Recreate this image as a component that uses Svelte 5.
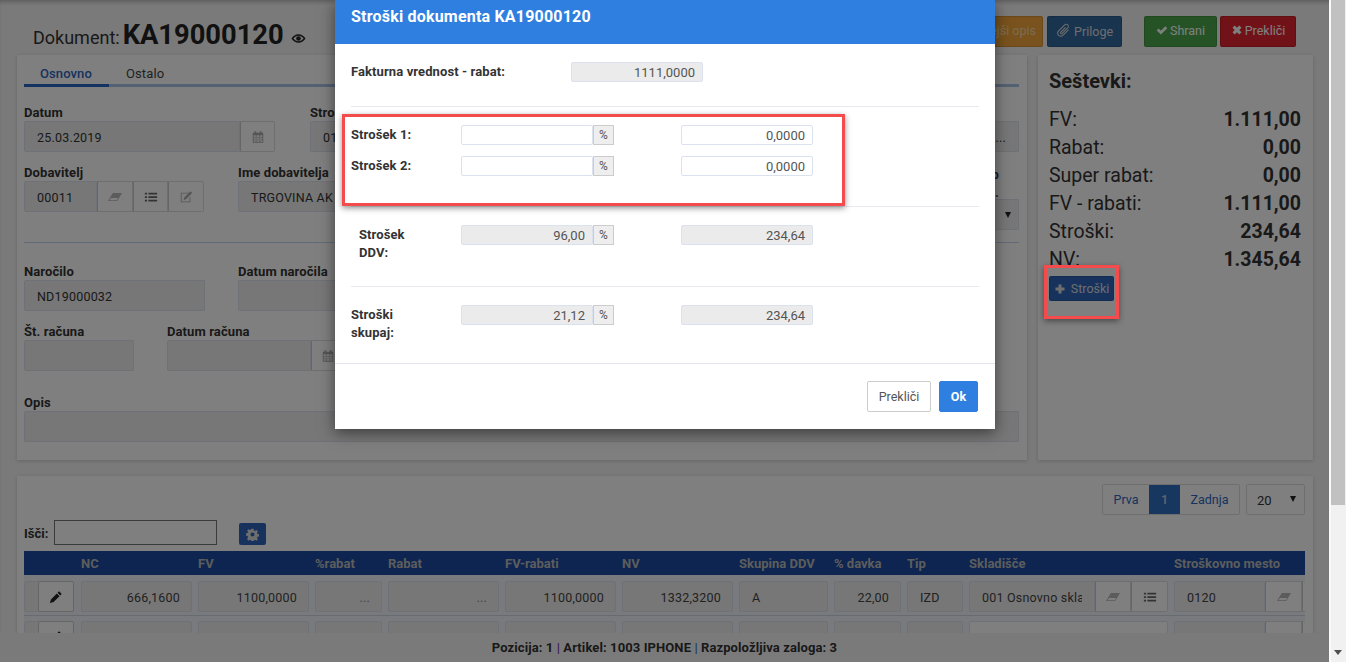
<script>
  const I = {
    eye: "M8 3.500c3.200 0 5.800 2 7.500 4.500-1.700 2.500-4.300 4.500-7.500 4.500S2.200 10.500.5 8C2.200 5.500 4.800 3.500 8 3.500zM8 5C5.800 5 3.900 6.300 2.500 8 3.900 9.700 5.800 11 8 11s4.100-1.300 5.500-3C12.100 6.300 10.200 5 8 5zM8 5.500a2.500 2.500 0 1 1 0 5 2.500 2.500 0 0 1 0-5z",
    cal: "M2 3h2V1.500h2V3h4V1.500h2V3h2v11.500H2zM3 6v7.500h10V6zM5.400 6h1v7.500h-1zM9.600 6h1v7.500h-1zM3 8.200h10v1H3zM3 10.800h10v1H3z",
    eraser: "M5.500 3.500H16L10.500 12.500H0zM3.400 9 1.700 11.700h8.300L11.600 9z",
    list: "M1 3h2.500v2.200H1zM5 3h10v2.200H5zM1 7h2.500v2.200H1zM5 7h10v2.200H5zM1 11h2.500v2.200H1zM5 11h10v2.200H5z",
    edit: "M2 3h9l-1 1H3v9h9V8.500l1-1V14H2zM13 1.500l2 2-7 7-2.800.8.800-2.800z",
    clip: "M13.800 7.500 8 13.300c-2 2-4.800 1.600-6-.2-1.200-1.600-1-3.600.4-5L8.800 1.700c1.200-1.200 3-1.200 4.100-.1s1.100 2.800-.1 4L7 11.400c-.7.700-1.700.7-2.300.1-.6-.6-.6-1.600.1-2.300l5-5 .8.800-5 5c-.2.200-.2.500 0 .7s.5.200.7 0l5.800-5.800c.8-.8.800-1.800.1-2.500s-1.800-.7-2.600.1L3.200 8.900c-1 1-1.100 2.500-.3 3.500.9 1.200 2.900 1.500 4.300.1l5.800-5.800z",
    ok: "M1 8.500 3.500 6l3 3L12.500 3 15 5.500 6.500 14z",
    x: "M2 5l3-3 3 3 3-3 3 3-3 3 3 3-3 3-3-3-3 3-3-3 3-3z",
    plus: "M6 2h4v4h4v4h-4v4H6v-4H2V6h4z",
    cog: "M6.700 1h2.600l.4 2 1.300.6 1.800-1.100 1.800 1.800-1.100 1.800.6 1.300 2 .4v2.600l-2 .4-.6 1.300 1.100 1.800-1.800 1.800-1.800-1.100-1.300.6-.4 2H6.700l-.4-2-1.300-.6-1.800 1.100-1.800-1.800L2.500 11l-.6-1.300-2-.4V6.700l2-.4.6-1.300-1.100-1.800 1.800-1.800L5 2.500l1.300-.6zM8 5.500a2.500 2.500 0 1 0 0 5 2.500 2.500 0 0 0 0-5z",
    pen: "M11.500 1.500l3 3-1.700 1.700-3-3zM9 4l3 3-6.800 6.800-3 .7-1.200.5.500-1.500.7-2.700z"
  };
  const summary = [["FV:","1.111,00"],["Rabat:","0,00"],["Super rabat:","0,00"],["FV - rabati:","1.111,00"],["Stroški:","234,64"],["NV:","1.345,64"]];
  const heads = ["","","NC","FV","%rabat","Rabat","FV-rabati","NV","Skupina DDV","% davka","Tip","Skladišče","Stroškovno mesto"];
</script>

{#snippet ic(n, c = "")}
  <svg class="ic {c}" viewBox="0 0 16 16" aria-hidden="true"><path fill-rule="evenodd" d={I[n]} /></svg>
{/snippet}

<div class="root">
  <div class="main">
    <div class="page">
      <header class="top">
        <div class="title">
          <span class="dok">Dokument:</span>
          <b class="num">KA19000120</b>
          {@render ic("eye", "eye")}
        </div>
        <div class="acts">
          <button class="btn orange">Podrobnejši opis</button>
          <button class="btn navy">{@render ic("clip", "clip")} Priloge</button>
          <button class="btn green">{@render ic("ok")}Shrani</button>
          <button class="btn red">{@render ic("x")}Prekliči</button>
        </div>
      </header>

      <div class="cols">
        <section class="panel form">
          <nav class="tabs">
            <span class="tab on">Osnovno</span>
            <span class="tab">Ostalo</span>
          </nav>

          <div class="row r1">
            <div class="f w251"><label>Datum</label><div class="grp"><div class="inp grow">25.03.2019</div><span class="add w35">{@render ic("cal")}</span></div></div>
            <div class="f g35"><label>Stro</label><div class="inp">01</div></div>
            <div class="f end"><label>&nbsp;</label><div class="inp dots">...</div></div>
          </div>

          <div class="row r2">
            <div class="f w180"><label>Dobavitelj</label><div class="grp"><div class="inp grow">00011</div><span class="add w36 pale">{@render ic("eraser")}</span><span class="add w35 dark">{@render ic("list")}</span><span class="add w36">{@render ic("edit")}</span></div></div>
            <div class="f g34 w400"><label>Ime dobavitelja</label><div class="inp">TRGOVINA AK</div></div>
            <div class="f end lower"><label class="two">p<br />. .</label><div class="inp sel"><i class="car"></i></div></div>
          </div>

          <hr class="sep" />

          <div class="row r3">
            <div class="f w181"><label>Naročilo</label><div class="inp">ND19000032</div></div>
            <div class="f g33 w400"><label>Datum naročila</label><div class="inp"></div></div>
          </div>

          <div class="row r4">
            <div class="f w110"><label>Št. računa</label><div class="inp"></div></div>
            <div class="f g33 w178"><label>Datum računa</label><div class="grp"><div class="inp grow"></div><span class="add w34">{@render ic("cal")}</span></div></div>
          </div>

          <div class="row r5">
            <div class="f full"><label>Opis</label><div class="inp"></div></div>
          </div>
        </section>

        <aside class="panel sum">
          <h3>Seštevki:</h3>
          <div class="list">
            {#each summary as s}
              <div class="li"><span>{s[0]}</span><b>{s[1]}</b></div>
            {/each}
          </div>
          <button class="btn blue small">{@render ic("plus", "plus")} Stroški</button>
        </aside>
      </div>

      <section class="panel tablep">
        <div class="pager">
          <div class="pages"><span>Prva</span><span class="cur">1</span><span>Zadnja</span></div>
          <div class="size">20<i class="car"></i></div>
        </div>
        <div class="search">
          <label>Išči:</label><span class="sinput"></span>
          <button class="gear">{@render ic("cog")}</button>
        </div>
        <div class="tbl">
          <div class="tr th">
            {#each heads as h}<div class="c">{h}</div>{/each}
          </div>
          <div class="tr body">
            <div class="c"><div class="inp"></div></div>
            <div class="c"><span class="editb">{@render ic("pen")}</span></div>
            <div class="c"><div class="inp r">666,1600</div></div>
            <div class="c"><div class="inp r">1100,0000</div></div>
            <div class="c"><div class="inp r dots">...</div></div>
            <div class="c"><div class="inp r dots">...</div></div>
            <div class="c"><div class="inp r">1100,0000</div></div>
            <div class="c"><div class="inp r">1332,3200</div></div>
            <div class="c"><div class="inp">A</div></div>
            <div class="c"><div class="inp r">22,00</div></div>
            <div class="c"><div class="inp">IZD</div></div>
            <div class="c"><div class="grp"><div class="inp grow"><span class="clipt">001 Osnovno skladišče</span></div><span class="add w36 pale">{@render ic("eraser")}</span><span class="add w37 dark">{@render ic("list")}</span></div></div>
            <div class="c last"><div class="grp"><div class="inp grow">0120</div><span class="add w37 pale">{@render ic("eraser")}</span><span class="add w10"></span></div></div>
          </div>
          <div class="tr body second">
            <div class="c"><div class="inp"></div></div>
            <div class="c"><span class="editb">{@render ic("pen")}</span></div>
            <div class="c"><div class="inp"></div></div>
            <div class="c"><div class="inp"></div></div>
            <div class="c"><div class="inp"></div></div>
            <div class="c"><div class="inp"></div></div>
            <div class="c"><div class="inp"></div></div>
            <div class="c"><div class="inp"></div></div>
            <div class="c"><div class="inp"></div></div>
            <div class="c"><div class="inp"></div></div>
            <div class="c"><div class="inp"></div></div>
            <div class="c"><div class="inp plain"></div></div>
            <div class="c last"><div class="grp"><div class="inp grow"></div><span class="add w37"></span><span class="add w10"></span></div></div>
          </div>
        </div>
      </section>
    </div>

    <footer class="foot"><b>Pozicija: 1 <em class="pur">|</em> Artikel: 1003 IPHONE <em class="blu">|</em> Razpoložljiva zaloga: 3</b></footer>

    <div class="overlay"></div>
  </div>

  <div class="modal">
    <div class="mhead">Stroški dokumenta KA19000120</div>
    <div class="msec">
      <div class="mrow first"><label>Fakturna vrednost - rabat:</label><div class="mi dis">1111,0000</div></div>
    </div>
    <div class="msec s2">
      <div class="mrow"><label>Strošek 1:</label><div class="mi pct"></div><span class="pc">%</span><div class="mi val">0,0000</div></div>
      <div class="mrow gap"><label>Strošek 2:</label><div class="mi pct"></div><span class="pc">%</span><div class="mi val">0,0000</div></div>
    </div>
    <div class="msec s3">
      <div class="mrow"><label class="ind">Strošek<br />DDV:</label><div class="mi pct dis">96,00</div><span class="pc">%</span><div class="mi val dis">234,64</div></div>
    </div>
    <div class="msec s4">
      <div class="mrow"><label>Stroški<br />skupaj:</label><div class="mi pct dis">21,12</div><span class="pc">%</span><div class="mi val dis">234,64</div></div>
    </div>
    <div class="mfoot">
      <button class="mb">Prekliči</button>
      <button class="mb ok">Ok</button>
    </div>
  </div>

  <div class="mark m1"></div>
  <div class="mark m2"></div>

  <div class="bar"><div class="thumb"></div><i class="down"></i></div>
</div>

<style>
  :global(body) { margin: 0; font-family: Roboto, "Liberation Sans", sans-serif; }
  .root { display: flex; width: 1346px; height: 662px; overflow: hidden; position: relative; }
  .main { position: relative; width: 1329px; height: 662px; overflow: hidden; flex: none; }
  .bar { flex: 1; background: #f1f1f1; position: relative; border-left: 2px solid #fafafa; box-sizing: border-box; }
  .thumb { height: 505px; background: #c1c1c1; margin-right: 1px; }
  .down { position: absolute; left: 3px; top: 650px; border: 4px solid transparent; border-top: 5px solid #505050; border-bottom: 0; }
  .page { width: 1330px; height: 662px; background: #f5f5f5; box-shadow: inset 0 4px 4px -2px rgba(0,0,0,.25); color: #333; font-size: 13px; }
  .ic { width: 14px; height: 14px; fill: currentColor; display: inline-block; vertical-align: -2px; }

  .top { display: flex; justify-content: space-between; align-items: flex-start; height: 55px; padding: 0 34px 0 33px; box-sizing: border-box; }
  .title { display: flex; align-items: baseline; margin-top: 19px; color: #222; }
  .dok { font-size: 18px; color: #333; margin-right: 3px; }
  .num { font-size: 27.3px; font-weight: 700; line-height: 33px; }
  .ic.eye { width: 15px; height: 15px; margin-left: 7px; transform: translateY(2px); }
  .acts { display: flex; margin-top: 16px; }
  .btn { border: 1px solid rgba(0,0,0,.12); border-radius: 2px; font: 12.5px Roboto, sans-serif; height: 31px; padding: 0 6px 2px 12px; color: #fff; box-sizing: border-box; white-space: nowrap; }
  .orange { margin-right: 4px; color: #f6d9a6; background: #f3a53a; }
  .navy { background: #33699f; width: 75px; padding: 0 0 2px; color: #ddd; margin-right: 22px; }
  .green { background: #4aa74a; width: 73px; padding: 0 0 2px; margin-right: 3px; }
  .red { background: #e0242f; width: 76px; padding: 0 0 2px; }
  .ic.clip { width: 15px; height: 15px; }
  .green .ic, .red .ic { width: 12px; height: 12px; margin-right: 2px; vertical-align: -1px; }

  .cols { display: flex; gap: 11px; margin-left: 17px; }
  .panel { background: #fff; box-shadow: 0 1px 4px rgba(0,0,0,.18); box-sizing: border-box; }
  .form { width: 1010px; height: 405px; padding: 0 8px 0 7px; }
  .tabs { display: flex; height: 29px; border-bottom: 3px solid #a9c3e6; box-sizing: content-box; }
  .tab { padding: 11px 17px 0; font-size: 13px; letter-spacing: .1px; line-height: 15px; color: #444; height: 32px; box-sizing: border-box; }
  .tab.on { color: #2d66c0; font-weight: 500; border-bottom: 3px solid #2a66c0; width: 85px; padding-left: 16px; padding-right: 0; }
  .row { display: flex; align-items: flex-start; }
  .r1 { margin-top: 19px; }
  .r2 { margin-top: 14px; height: 46px; }
  .r3 { margin-top: 22px; }
  .r4 { margin-top: 14px; }
  .r5 { margin-top: 25px; }
  .f { display: flex; flex-direction: column; flex: none; }
  .f label { font-weight: 700; font-size: 13px; letter-spacing: .1px; line-height: 13px; height: 15px; color: #333; white-space: nowrap; flex: none; }
  .f .two { height: 33px; line-height: 18px; margin-top: -18px; text-align: right; padding-right: 20px; color: #24406e; }
  .w251 { width: 251px; } .w180 { width: 180px; } .w181 { width: 181px; } .w110 { width: 110px; } .w178 { width: 178px; } .w400 { width: 400px; }
  .g35 { margin-left: 35px; width: 400px; } .g34 { margin-left: 34px; } .g33 { margin-left: 33px; }
  .end { margin-left: auto; width: 80px; }
  .lower { margin-top: 18px; }
  .full { width: 995px; }
  .inp { height: 31px; line-height: 31px; background: #eee; border: 1px solid #dde3ea; border-radius: 2px 0 0 2px; box-sizing: border-box; padding: 0 12px; font-size: 12.5px; color: #444; white-space: nowrap; overflow: hidden; letter-spacing: .2px; flex-shrink: 0; }
  .f .inp { color: #333; }
  .dots { text-align: right; color: #888; }
  .sel { position: relative; }
  .car { position: absolute; right: 7px; top: 12px; border: 3px solid transparent; border-top: 6px solid #222; border-bottom: 0; }
  .grp { display: flex; }
  .grow { flex: 1; min-width: 0; }
  .add { box-sizing: border-box; height: 31px; border: 1px solid #ddd; border-left: 1px solid #ccc; background: #fff; color: #aaa; display: flex; align-items: center; justify-content: center; flex: none; }
  .add.dark { color: #666; }
  .add.pale { color: #b8b8b8; }
  .add:last-child { border-radius: 0 2px 2px 0; }
  .w34 { width: 34px; } .w35 { width: 35px; } .w36 { width: 36px; } .w37 { width: 37px; } .w10 { width: 3px; border-right: 0; }
  .sep { border: 0; border-top: 1px solid #c3d7ee; margin: 30px 0 0; }

  .sum { width: 275px; height: 405px; padding: 13px 11px; }
  .sum h3 { margin: 0; font-size: 20px; line-height: 27px; font-weight: 700; color: #333; }
  .list { margin-top: 10px; }
  .li { display: flex; justify-content: space-between; height: 28px; line-height: 29px; font-size: 19.5px; color: #333; padding-right: 1px; }
  .li b { font-weight: 700; }
  .small { height: 25px; width: 65px; padding: 0 0 1px; background: #2f66bb; color: #ddd; margin-top: 3px; display: block; }
  .ic.plus { width: 12px; height: 12px; margin-right: 2px; }

  .tablep { width: 1296px; height: 190px; margin: 16px 0 0 17px; padding: 8px 8px 0 7px; position: relative; }
  .pager { display: flex; justify-content: flex-end; gap: 6px; height: 31px; }
  .pages { display: flex; border: 1px solid #ddd; border-radius: 2px; color: #2d66c0; height: 31px; box-sizing: border-box; font-size: 12.5px; }
  .pages span { line-height: 29px; }
  .pages span:first-child { width: 46px; text-align: center; }
  .pages span:last-child { width: 59px; text-align: center; }
  .pages .cur { background: #2e6fc2; color: #ccd; width: 31px; text-align: center; font-weight: 500; }
  .size { width: 59px; height: 31px; box-sizing: border-box; border: 1px solid #ddd; border-radius: 2px; padding: 8px 10px; color: #333; position: relative; font-size: 13px; }
  .size .car { top: 11px; right: 8px; }
  .search { display: flex; align-items: flex-end; height: 30px; }
  .search label { font-weight: 700; line-height: 28px; width: 29px; color: #333; height: 25px; white-space: nowrap; }
  .sinput { width: 163px; height: 25px; border: 1px solid #777; box-sizing: border-box; margin-left: 1px; }
  .gear { width: 27px; height: 22px; margin-left: 22px; background: #2f66bb; border: 0; border-radius: 2px; color: #ddd; padding: 0; }
  .gear .ic { width: 13px; height: 13px; }
  .tbl { margin-top: 6px; width: 1281px; overflow: hidden; }
  .tr { display: grid; grid-template-columns: 14px 43px 117px 117px 73px 117px 117px 117px 95px 73px 62px 205px 131px; }
  .th { background: #1a4ba0; color: #bbb; font-weight: 700; height: 24px; line-height: 26px; }
  .th .c { white-space: nowrap; }
  .body { background: #f0f4fa; height: 41px; padding-top: 6px; box-sizing: border-box; border-bottom: 1px solid #cfd5de; }
  .second { padding-top: 5px; }
  .body .c { padding-right: 6px; min-width: 0; }
  .body .c:first-child { padding-right: 2px; }
  .body .c.last { padding-right: 0; }
  .body .inp { border-radius: 2px; padding: 0 11px 0 12px; }
  .body .r { text-align: right; }
  .grp .inp { border-radius: 2px 0 0 2px; }
  .body .grp .inp { padding-right: 0; }
  .clipt { display: block; overflow: hidden; width: 100px; }
  .plain { background: #fff; }
  .editb { display: flex; width: 36px; height: 31px; box-sizing: border-box; border: 1px solid #ccc; border-radius: 2px; background: #fff; color: #222; align-items: center; justify-content: center; }

  .foot { position: absolute; left: 0; right: 0; bottom: 0; height: 29px; background: #f5f5f5; text-align: center; line-height: 30px; font-size: 13px; letter-spacing: .1px; color: #333; }
  .foot b { font-weight: 700; }
  .foot em { font-style: normal; font-weight: 400; }
  .pur { color: #7030a0; } .blu { color: #2d66c0; }

  .overlay { position: absolute; inset: 0; background: rgba(0,0,0,.5); }

  .modal { position: absolute; top: 0; left: 335px; width: 660px; height: 429px; background: #fff; box-shadow: 0 4px 14px rgba(0,0,0,.5); color: #333; font-size: 13px; }
  .mhead { height: 44px; background: #2f7fe0; color: #fff; font-weight: 700; font-size: 16px; letter-spacing: .2px; line-height: 33px; padding-left: 16px; box-sizing: border-box; }
  .msec { margin: 0 16px; padding-top: 18px; box-sizing: border-box; border-bottom: 1px solid #e6e9ee; height: 63px; }
  .s2 { height: 100px; } .s3 { height: 80px; }
  .s4 { height: 76px; border-bottom: 0; }
  .mrow { display: flex; align-items: flex-start; }
  .gap { margin-top: 11px; }
  .mrow label { width: 110px; flex: none; font-weight: 700; letter-spacing: .1px; line-height: 18px; padding-top: 1px; }
  .first label { width: 220px; }
  .ind { padding-left: 8px; box-sizing: border-box; }
  .mi { width: 132px; height: 20px; box-sizing: border-box; border: 1px solid #d9e2ee; border-radius: 2px; line-height: 19px; text-align: right; padding-right: 7px; color: #555; font-size: 13px; background: #fff; }
  .dis { background: #ebebeb; }
  .pc { width: 21px; height: 20px; box-sizing: border-box; border: 1px solid #ccc; background: #eee; text-align: center; font-size: 12px; line-height: 19px; color: #555; }
  .val { margin-left: 67px; }
  .mfoot { border-top: 1px solid #e3e6ea; height: 66px; box-sizing: border-box; display: flex; justify-content: flex-end; gap: 8px; padding: 17px 17px 0 0; }
  .mb { height: 31px; width: 64px; background: #fff; border: 1px solid #ccc; border-radius: 2px; color: #555; font: 12.5px Roboto, sans-serif; padding: 0; }
  .ok { width: 39px; background: #2f7fe0; border-color: #2f7fe0; color: #fff; font-weight: 700; }

  .mark { position: absolute; border: 3px solid #f44c4c; box-sizing: border-box; box-shadow: 0 2px 6px rgba(0,0,0,.45); }
  .m1 { left: 342px; top: 114px; width: 503px; height: 92px; }
  .m2 { left: 1044px; top: 265px; width: 75px; height: 54px; }
</style>
